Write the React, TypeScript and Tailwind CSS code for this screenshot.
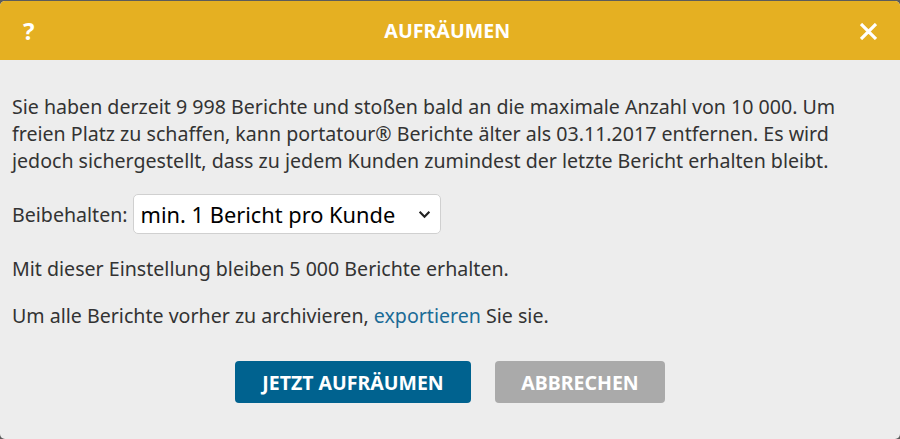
import React from "react";

export default function App() {
  return (
    <div className="h-[439px] w-[900px] bg-[#5c5c5c] pt-px" style={{ fontFamily: '"Noto Sans", sans-serif' }}>
      <div className="flex h-[438px] flex-col overflow-hidden rounded-[5px] bg-[#ededed]">
        <div className="flex h-[59px] items-center justify-between bg-[#e5b022] pl-[23px] pr-[23px] text-white">
          <span className="text-[24px] font-bold leading-none">?</span>
          <span className="text-[19.6px] font-bold">AUFRÄUMEN</span>
          <svg width="17" height="17" viewBox="0 0 16 16" className="mt-[1px]">
            <path d="M2 2 L14 14 M14 2 L2 14" stroke="white" strokeWidth="3" strokeLinecap="square" />
          </svg>
        </div>
        <div className="flex flex-1 flex-col px-3 pt-[33px] text-[19.6px] leading-[27px] text-[#333333]">
          <p>
            Sie haben derzeit 9 998 Berichte und stoßen bald an die maximale Anzahl von 10 000. Um freien Platz zu schaffen, kann portatour® Berichte älter als 03.11.2017 entfernen. Es wird jedoch sichergestellt, dass zu jedem Kunden zumindest der letzte Bericht erhalten bleibt.
          </p>
          <div className="mt-[20px] flex items-center gap-[5px]">
            <span>Beibehalten:</span>
            <div className="flex h-[40px] w-[308px] items-center justify-between rounded-[5px] border border-[#d0d0d0] bg-white pl-[7px] pr-[9px]">
              <span className="text-[21.8px] text-black">min. 1 Bericht pro Kunde</span>
              <svg width="13" height="9" viewBox="0 0 12 8">
                <path d="M1.5 1.5 L6 6 L10.5 1.5" fill="none" stroke="#222" strokeWidth="2" />
              </svg>
            </div>
          </div>
          <p className="mt-[21px]">Mit dieser Einstellung bleiben 5 000 Berichte erhalten.</p>
          <p className="mt-[20px]">
            Um alle Berichte vorher zu archivieren, <span className="text-[#1b6b96]">exportieren</span> Sie sie.
          </p>
          <div className="mt-[32px] flex justify-center gap-[24px]">
            <button className="h-[42px] w-[236px] rounded-[4px] bg-[#00628f] text-[19.5px] font-bold text-white">JETZT AUFRÄUMEN</button>
            <button className="h-[42px] w-[170px] rounded-[4px] bg-[#aaaaaa] text-[19.5px] font-bold text-white">ABBRECHEN</button>
          </div>
        </div>
      </div>
    </div>
  );
}
